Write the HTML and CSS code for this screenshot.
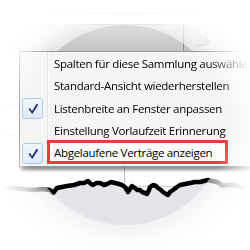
FILE: index.html
```html
<!DOCTYPE html>
<html lang="de">
<head>
<meta charset="utf-8">
<title>Kontextmenü</title>
<link rel="stylesheet" href="styles.css">
</head>
<body>
<div class="scene">
  <div class="topbar"><div class="frame"></div></div>
  <div class="header">
    <div class="col"></div>
    <div class="tool">
      <svg width="18" height="16" viewBox="0 0 18 16" aria-hidden="true">
        <path d="M1.5 0.5 H8.5 L11.5 3.5 V8 M11.5 13.5 V15.5 H1.5 Z" fill="#fff" stroke="#8a8a8a"/>
        <path d="M3.5 4.5 H8.5 M3.5 6.5 H9.5 M3.5 8.5 H8.5 M3.5 10.5 H7.5" stroke="#9a9a9a"/>
        <path d="M8 11.5 H15 M12.5 9 L15.5 11.5 L12.5 14" fill="none" stroke="#7a7a7a" stroke-width="1.2"/>
      </svg>
    </div>
  </div>
  <div class="rows">
    <div class="row first"></div>
    <div class="row"></div>
    <div class="row last"></div>
  </div>
  <svg class="chart" width="250" height="90" viewBox="0 0 250 90" aria-hidden="true">
    <path d="M0 29 L13 28 L22 29 L33 30 L42 29 L50 30 L53 33 L57 28 L62 27 L67 26 L74 25 L80 23 L84 23 L88 21 L91 24 L93 25 L96 23 L100 23 L104 25 L107 24 L111 22 L115 23 L119 24 L122 25 L125 27 L128 32 L130 29 L132 26 L135 28 L137 30 L140 30 L142 32 L145 33 L147 34 L149 30 L150 27 L153 25 L156 26 L158 28 L161 30 L163 32 L166 34 L168 35 L170 32 L173 30 L177 27 L180 25 L185 24 L190 23 L195 22 L200 22 L204 21 L208 20 L212 21 L217 22 L220 24 L223 26 L228 25 L233 25 L237 26 L240 27 L250 28 V90 H0 Z" fill="#e3e5e9"/>
    <path d="M124.5 0 V27" stroke="#bcbcbc"/>
    <path d="M125 26.5 H175" stroke="#cfcfcf"/>
    <path d="M0 29 L13 28 L22 29 L33 30 L42 29 L50 30 L53 33 L57 28 L62 27 L67 26 L74 25 L80 23 L84 23 L88 21 L91 24 L93 25 L96 23 L100 23 L104 25 L107 24 L111 22 L115 23 L119 24 L122 25 L125 27 L128 32 L130 29 L132 26 L135 28 L137 30 L140 30 L142 32 L145 33 L147 34 L149 30 L150 27 L153 25 L156 26 L158 28 L161 30 L163 32 L166 34 L168 35 L170 32 L173 30 L177 27 L180 25 L185 24 L190 23 L195 22 L200 22 L204 21 L208 20 L212 21 L217 22 L220 24 L223 26 L228 25 L233 25 L237 26 L240 27 L250 28" fill="none" stroke="#000" stroke-width="4.5" stroke-linejoin="round"/>
  </svg>
  <div class="lens"></div>
  <div class="menu-wrap">
    <ul class="menu">
      <li class="item"><span class="gutter"></span><span class="label">Spalten für diese Sammlung auswählen</span></li>
      <li class="item"><span class="gutter"></span><span class="label">Standard-Ansicht wiederherstellen</span></li>
      <li class="item"><span class="gutter"><span class="check"><svg width="19" height="19" viewBox="0 0 19 19" aria-hidden="true"><path d="M5.5 10 L7 9 L9 12.2 L13.6 4.8 L15.2 5.8 L9.3 15 Z" fill="#1b2a78"/></svg></span></span><span class="label">Listenbreite an Fenster anpassen</span></li>
      <li class="item"><span class="gutter"></span><span class="label">Einstellung Vorlaufzeit Erinnerung</span></li>
      <li class="item flagged"><span class="gutter"><span class="check"><svg width="19" height="19" viewBox="0 0 19 19" aria-hidden="true"><path d="M5.5 10 L7 9 L9 12.2 L13.6 4.8 L15.2 5.8 L9.3 15 Z" fill="#1b2a78"/></svg></span></span><span class="label">Abgelaufene Verträge anzeigen</span></li>
    </ul>
  </div>
</div>
</body>
</html>
```

FILE: styles.css
```css
html, body {
  margin: 0;
  padding: 0;
  background: #fff;
}

.scene {
  position: relative;
  width: 250px;
  height: 250px;
  overflow: hidden;
  display: flex;
  flex-direction: column;
  font-family: "Open Sans", "Noto Sans", sans-serif;
}

.topbar {
  flex: none;
  padding-bottom: 10px;
  border-bottom: 1px solid #c9c9c9;
}

.topbar .frame {
  height: 13px;
  border-bottom: 1px solid #dadada;
}

.header {
  flex: none;
  height: 27px;
  display: flex;
  background: linear-gradient(#dedede, #c2c2c2);
}

.header .col {
  width: 183px;
  border-right: 1px solid #8c8c8c;
}

.header .tool {
  padding: 4px 0 0 10px;
}

.rows {
  flex: none;
  height: 108px;
  display: flex;
  flex-direction: column;
}

.row {
  height: 30px;
  border-bottom: 1px solid #e2e2e2;
}

.row.first {
  height: 52px;
}

.row.last {
  border-bottom: 0;
  flex: 1;
}

.chart {
  flex: none;
  display: block;
}

.lens {
  position: absolute;
  inset: 0;
  pointer-events: none;
  background: radial-gradient(circle at 125px 125px,
    rgba(255, 255, 255, 0) 99.5px,
    rgba(255, 255, 255, 0.55) 100.5px,
    rgba(255, 255, 255, 0.86) 118px,
    #fff 138px);
}

.menu-wrap {
  position: absolute;
  left: 19px;
  top: 51px;
  padding: 0 8px 8px 0;
  -webkit-mask-image: radial-gradient(circle at 106px 74px, #000 102px, rgba(0, 0, 0, 0.55) 117px, transparent 138px);
  mask-image: radial-gradient(circle at 106px 74px, #000 102px, rgba(0, 0, 0, 0.55) 117px, transparent 138px);
}

.menu {
  list-style: none;
  margin: 0;
  padding: 0 2px 1px 2px;
  width: 236px;
  border: 1px solid #979797;
  background-color: #f5f5f5;
  background-image: linear-gradient(to right,
    transparent 27px, #e2e3e3 27px, #e2e3e3 28px,
    #fff 28px, #fff 29px, transparent 29px);
  box-shadow: 2px 3px 3px rgba(0, 0, 0, 0.45);
  font-size: 11.5px;
  letter-spacing: -0.3px;
  color: #000;
  white-space: nowrap;
}

.item {
  display: flex;
  align-items: center;
  height: 22.5px;
}

.gutter {
  flex: none;
  width: 25px;
  height: 21px;
  display: flex;
}

.check {
  width: 21px;
  height: 21px;
  box-sizing: border-box;
  border: 1px solid #a9c8ee;
  border-radius: 3px;
  background: linear-gradient(#f3f8fe, #dce8f9);
}

.check svg {
  display: block;
}

.label {
  padding-left: 7px;
}

.flagged .label {
  box-sizing: border-box;
  width: 181px;
  height: 24px;
  margin-bottom: 2px;
  padding-left: 4px;
  display: flex;
  align-items: center;
  border: 3px solid #e43f3f;
  background: #fbfcfe;
}
```
